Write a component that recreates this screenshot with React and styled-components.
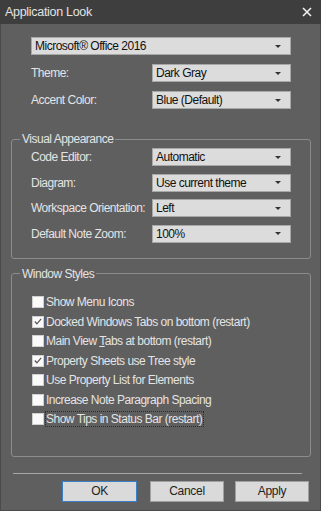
import styled, { createGlobalStyle } from "styled-components";

const GlobalStyle = createGlobalStyle`
	html, body {
		margin: 0;
		padding: 0;
		background: #5f5f5f;
	}
	body {
		font-family: "Liberation Sans", Arial, sans-serif;
		font-size: 12px;
		letter-spacing: -0.5px;
	}
`;

const topRows = [
	{ label: "Theme:", value: "Dark Gray" },
	{ label: "Accent Color:", value: "Blue (Default)" },
];

const visualRows = [
	{ label: "Code Editor:", value: "Automatic" },
	{ label: "Diagram:", value: "Use current theme" },
	{ label: "Workspace Orientation:", value: "Left" },
	{ label: "Default Note Zoom:", value: "100%" },
];

const options = [
	{ text: "Show Menu Icons", checked: false },
	{ text: "Docked Windows Tabs on bottom (restart)", checked: true },
	{ text: "Main View Tabs at bottom (restart)", checked: false, accel: 10 },
	{ text: "Property Sheets use Tree style", checked: true },
	{ text: "Use Property List for Elements", checked: false },
	{ text: "Increase Note Paragraph Spacing", checked: false },
	{ text: "Show Tips in Status Bar (restart)", checked: false, focused: true },
];

const Combo = ({ value, wide }) => (
	<Select $wide={wide}>
		<span>{value}</span>
		<Arrow />
	</Select>
);

const OptionText = ({ text, accel }) => {
	if (accel === undefined) return text;
	return (
		<>
			{text.slice(0, accel)}
			<u>{text[accel]}</u>
			{text.slice(accel + 1)}
		</>
	);
};

const App = () => {
	return (
		<Window>
			<GlobalStyle />
			<TitleBar>
				<Title>Application Look</Title>
				<Close>
					<svg width="10" height="10" viewBox="0 0 10 10">
						<path d="M1 1 L9 9 M9 1 L1 9" stroke="#f0f0f0" strokeWidth="1.6" />
					</svg>
				</Close>
			</TitleBar>
			<Body>
				<TopSection>
					<Combo value="Microsoft® Office 2016" wide />
					{topRows.map((r) => (
						<Row key={r.label}>
							<Label>{r.label}</Label>
							<Combo value={r.value} />
						</Row>
					))}
				</TopSection>

				<Group $first>
					<Legend>Visual Appearance</Legend>
					<RowList>
						{visualRows.map((r) => (
							<Row key={r.label}>
								<Label>{r.label}</Label>
								<Combo value={r.value} />
							</Row>
						))}
					</RowList>
				</Group>

				<Group $tall>
					<Legend>Window Styles</Legend>
					<CheckList>
						{options.map((o) => (
							<CheckRow key={o.text}>
								<Box>
									{o.checked && (
										<svg width="11" height="11" viewBox="0 0 11 11">
											<path
												d="M2 5.5 L4.3 8 L9 2.5"
												fill="none"
												stroke="#555"
												strokeWidth="1.3"
											/>
										</svg>
									)}
								</Box>
								<CheckLabel $focused={o.focused}>
									<OptionText text={o.text} accel={o.accel} />
								</CheckLabel>
							</CheckRow>
						))}
					</CheckList>
				</Group>

				<Separator />

				<Buttons>
					<Button $default>OK</Button>
					<Button>Cancel</Button>
					<Button>Apply</Button>
				</Buttons>
			</Body>
		</Window>
	);
};

export default App;

const Window = styled.div`
	width: 321px;
	height: 511px;
	box-sizing: border-box;
	display: flex;
	flex-direction: column;
	background: #5f5f5f;
	border: 1px solid #4a4a4a;
	border-top: none;
`;

const TitleBar = styled.div`
	height: 24px;
	flex-shrink: 0;
	display: flex;
	align-items: center;
	justify-content: space-between;
	background: #3e3e3e;
	padding: 0 9px 0 5px;
	margin: 0 -1px;
`;

const Title = styled.div`
	color: #e2e2e2;
	font-size: 12.5px;
	letter-spacing: -0.3px;
`;

const Close = styled.div`
	display: flex;
	align-items: center;
`;

const Body = styled.div`
	flex: 1;
	display: flex;
	flex-direction: column;
	padding: 0 0 0 10px;
`;

const TopSection = styled.div`
	display: flex;
	flex-direction: column;
	gap: 9px;
	padding: 13px 0 0 20px;
`;

const Row = styled.div`
	display: flex;
	align-items: center;
	height: 18px;
`;

const RowList = styled.div`
	display: flex;
	flex-direction: column;
	gap: 7.5px;
	padding: 2px 0 0 19px;
`;

const Label = styled.div`
	width: 121px;
	color: #e4e4e4;
	white-space: nowrap;
`;

const Select = styled.div`
	width: ${(p) => (p.$wide ? "260px" : "139px")};
	height: 18px;
	box-sizing: border-box;
	display: flex;
	align-items: center;
	justify-content: space-between;
	padding: 0 9px 0 3px;
	background: #dcdcdc;
	border: 1px solid #a8a8a8;
	color: #111;
	white-space: nowrap;
`;

const Arrow = styled.span`
	width: 0;
	height: 0;
	border-left: 3px solid transparent;
	border-right: 3px solid transparent;
	border-top: 3px solid #333;
`;

const Group = styled.fieldset`
	margin: ${(p) => (p.$first ? "23px 0 0 0" : "8px 0 0 0")};
	padding: 0 0 ${(p) => (p.$tall ? "30px" : "15px")} 0;
	width: 300px;
	box-sizing: border-box;
	border: 1px solid #8c8c8c;
	border-radius: 3px;
`;

const Legend = styled.legend`
	margin-left: 8px;
	padding: 0 2px;
	color: #e4e4e4;
	line-height: 14px;
`;

const CheckList = styled.div`
	display: flex;
	flex-direction: column;
	gap: 6.5px;
	padding: 15px 0 0 20px;
`;

const CheckRow = styled.div`
	display: flex;
	align-items: center;
	height: 13px;
`;

const Box = styled.div`
	width: 12px;
	height: 12px;
	box-sizing: border-box;
	background: #fafafa;
	border: 1px solid #d0d0d0;
	display: flex;
	align-items: center;
	justify-content: center;
	margin-right: 1px;
`;

const CheckLabel = styled.span`
	color: #e4e4e4;
	padding: 0 1px 0 0;
	border: 1px dotted ${(p) => (p.$focused ? "#2a2a2a" : "transparent")};
	white-space: nowrap;
`;

const Separator = styled.div`
	margin: 16px 0 0 2px;
	width: 289px;
	height: 1px;
	background: #a6a6a6;
`;

const Buttons = styled.div`
	display: flex;
	justify-content: flex-end;
	gap: 11px;
	padding: 7px 11px 0 0;
`;

const Button = styled.button`
	width: ${(p) => (p.$default ? "75px" : "74px")};
	height: 21px;
	box-sizing: border-box;
	margin-right: ${(p) => (p.$default ? "2px" : "0")};
	background: #dadada;
	border: 1px solid ${(p) => (p.$default ? "#3a7fc4" : "#a0a0a0")};
	color: #222;
	font-family: "Liberation Sans", Arial, sans-serif;
	font-size: 12px;
	letter-spacing: -0.3px;
	padding: 0;
`;
